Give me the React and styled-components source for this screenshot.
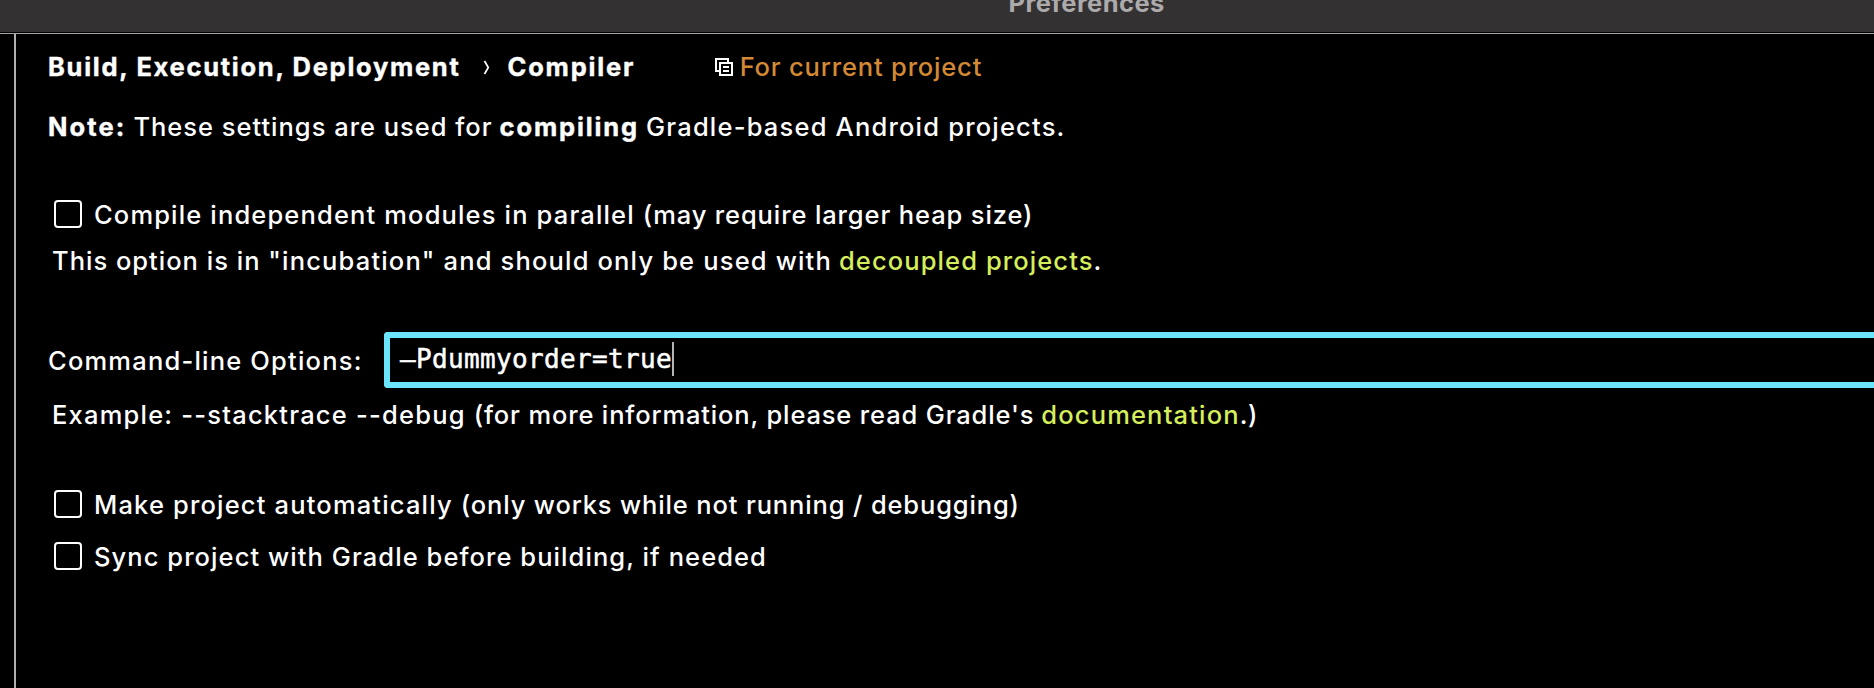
import React, { useState } from "react";
import styled, { createGlobalStyle } from "styled-components";

const GlobalStyle = createGlobalStyle`
  * { box-sizing: border-box; }
  body { margin: 0; background: #000; overflow: hidden; }
`;

const Window = styled.div`
  display: flex;
  flex-direction: column;
  width: 100%;
  height: 688px;
  overflow: hidden;
  background: #000;
  color: #fff;
  font: 500 25.5px/30px Inter, "Liberation Sans", sans-serif;
`;

const TitleBar = styled.header`
  flex: none;
  height: 33px;
  padding-left: 1008.5px;
  overflow: hidden;
  background: #333132;
  border-bottom: 1px solid #000;
`;

const Title = styled.h1`
  margin: -12px 0 0;
  color: #acaaab;
  font-size: inherit;
  font-weight: 700;
  letter-spacing: 0.43px;
`;

const Body = styled.main`
  display: flex;
  flex: 1;
  border-top: 1px solid #a5a5a5;
`;

const SidebarEdge = styled.div`
  flex: none;
  width: 16px;
  border-right: 2px solid #b0b0b0;
`;

const Panel = styled.section`
  display: flex;
  flex: 1;
  flex-direction: column;
  min-width: 0;
  padding: 18px 0 0 32px;
`;

const Breadcrumb = styled.nav`
  display: flex;
  height: 30px;
  margin-bottom: 30px;
`;

const Separator = styled.svg`
  flex: none;
  width: 7px;
  height: 15px;
  margin: 8px 17.5px 0 22.5px;
`;

const Scope = styled.span`
  display: flex;
  gap: 7px;
  margin-left: 79.5px;
  color: #d48a35;
`;

const ScopeIcon = styled.svg`
  flex: none;
  width: 18px;
  height: 18px;
  margin-top: 6px;
`;

const Line = styled.p`
  display: flex;
  flex: none;
  height: 30px;
  margin: 0 0 0 ${(p) => p.$indent || 0}px;
`;

const Text = styled.span`
  flex: none;
  white-space: pre;
  letter-spacing: ${(p) => p.$track}px;
  margin-left: ${(p) => (p.$spaced ? 7 : 0)}px;
`;

const Strong = styled(Text).attrs({ as: "b" })`
  font-weight: 700;
  -webkit-text-stroke: 0.4px currentColor;
`;

const Link = styled(Text).attrs({ as: "a" })`
  color: #d5ee5b;
  cursor: pointer;
`;

const Group = styled.div`
  display: flex;
  flex-direction: column;
  gap: ${(p) => p.$gap}px;
  margin-top: ${(p) => p.$top}px;
`;

const Option = styled.label`
  display: flex;
  height: 30px;
  padding-left: 6px;
`;

const Checkbox = styled.input.attrs({ type: "checkbox" })`
  appearance: none;
  flex: none;
  width: 28px;
  height: 28px;
  margin: 0 12px 0 0;
  border: 2px solid #fff;
  border-radius: 4px;
  background: #000;

  &:checked {
    background: #6be5fb;
  }
`;

const FieldRow = styled.div`
  display: flex;
  height: 56px;
`;

const FieldLabel = styled(Text)`
  width: 336px;
  padding-top: 14px;
`;

const Field = styled.div`
  display: flex;
  flex: 1;
  align-items: flex-start;
  padding: 4px 0 0 10px;
  border: 6px solid #6be5fb;
  border-right: 0;
  border-radius: 4px 0 0 4px;
  font: 400 26px/34px "DejaVu Sans Mono", monospace;
  letter-spacing: 0.34px;
  -webkit-text-stroke: 0.5px currentColor;
`;

const Caret = styled.span`
  width: 2px;
  height: 34px;
  background: #b4b4b4;
`;

function CheckOption({ children }) {
  const [on, setOn] = useState(false);
  return (
    <Option>
      <Checkbox checked={on} onChange={() => setOn(!on)} />
      {children}
    </Option>
  );
}

export default function App() {
  return (
    <Window>
      <GlobalStyle />
      <TitleBar>
        <Title>Preferences</Title>
      </TitleBar>
      <Body>
        <SidebarEdge />
        <Panel>
          <Breadcrumb>
            <Strong $track={1.71}>Build, Execution, Deployment</Strong>
            <Separator viewBox="0 0 7 15">
              <path d="M1.5 1 L5.3 7.5 L1.5 14" fill="none" stroke="#fff" strokeWidth="1.7" />
            </Separator>
            <Strong $track={1.8}>Compiler</Strong>
            <Scope>
              <ScopeIcon viewBox="0 0 18 18" fill="none" stroke="#fff" strokeWidth="2" shapeRendering="crispEdges">
                <path d="M13 4V1H1V13H4" />
                <path d="M5 5H17V17H5Z" />
                <path d="M8 9H14M8 13H14" />
              </ScopeIcon>
              <Text $track={0.82}>For current project</Text>
            </Scope>
          </Breadcrumb>

          <Line>
            <Strong $track={2.1}>Note:</Strong>
            <Text $track={0.99} $spaced>These settings are used for</Text>
            <Strong $track={1.86} $spaced>compiling</Strong>
            <Text $track={1.2} $spaced>Gradle-based Android projects.</Text>
          </Line>

          <Group $top={58} $gap={16}>
            <CheckOption>
              <Text $track={1.15}>{"Compile independent modules in parallel "}</Text>
              <Text $track={0.88}>(may require larger heap size)</Text>
            </CheckOption>
            <Line $indent={4}>
              <Text $track={1}>{"This option is in "}</Text>
              <Text $track={1.17}>"incubation" and should only be used with</Text>
              <Link $track={1.1} $spaced>decoupled projects</Link>
              <Text $track={1.1}>.</Text>
            </Line>
          </Group>

          <Group $top={56} $gap={12}>
            <FieldRow>
              <FieldLabel $track={1.2}>Command-line Options:</FieldLabel>
              <Field>
                –Pdummyorder=true
                <Caret />
              </Field>
            </FieldRow>
            <Line $indent={4}>
              <Text $track={1.21}>{"Example: --stacktrace --debug "}</Text>
              <Text $track={0.85}>(for more information, please read Gradle's</Text>
              <Link $track={1.17} $spaced>documentation</Link>
              <Text $track={0.6}>.)</Text>
            </Line>
          </Group>

          <Group $top={60} $gap={22}>
            <CheckOption>
              <Text $track={1.17}>{"Make project automatically "}</Text>
              <Text $track={0.85}>(only works while not running / debugging)</Text>
            </CheckOption>
            <CheckOption>
              <Text $track={1.07}>Sync project with Gradle before building, if needed</Text>
            </CheckOption>
          </Group>
        </Panel>
      </Body>
    </Window>
  );
}
